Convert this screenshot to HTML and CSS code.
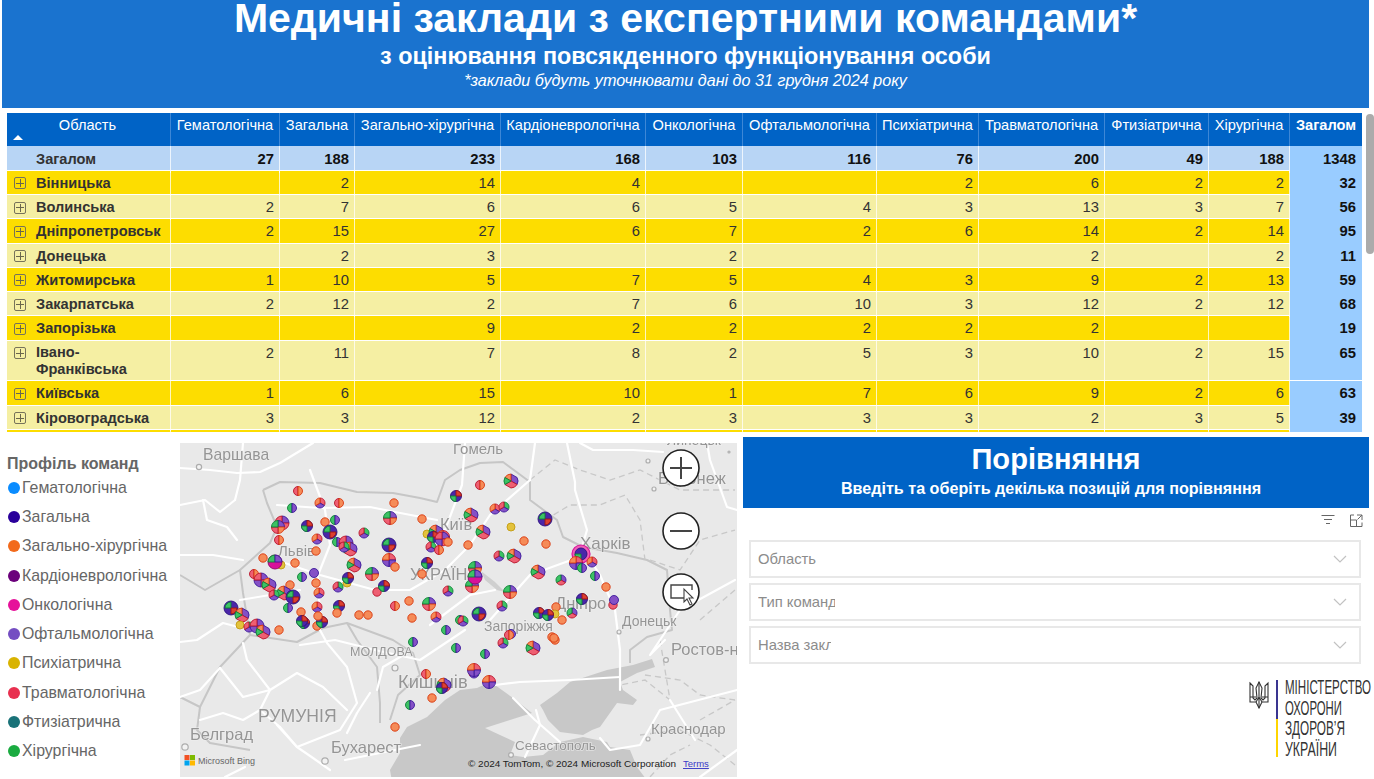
FILE: index.html
```html
<!DOCTYPE html>
<html lang="uk">
<head>
<meta charset="utf-8">
<title>Медичні заклади</title>
<link rel="stylesheet" href="styles.css">
</head>
<body>
<header class="banner">
  <h1>Медичні заклади з експертними командами*</h1>
  <h2>з оцінювання повсякденного функціонування особи</h2>
  <p>*заклади будуть уточнювати дані до 31 грудня 2024 року</p>
</header>

<section class="matrix">
  <div class="row head">
    <div class="cell corner"><span>Область</span><i class="sort"></i></div>
    <div class="cell">Гематологічна</div><div class="cell">Загальна</div><div class="cell">Загально-хірургічна</div><div class="cell">Кардіоневрологічна</div><div class="cell">Онкологічна</div><div class="cell">Офтальмологічна</div><div class="cell">Психіатрична</div><div class="cell">Травматологічна</div><div class="cell">Фтизіатрична</div><div class="cell">Хірургічна</div><div class="cell sum">Загалом</div>
  </div>
  <div class="row total">
    <div class="cell name">Загалом</div>
    <div class="cell">27</div><div class="cell">188</div><div class="cell">233</div><div class="cell">168</div><div class="cell">103</div><div class="cell">116</div><div class="cell">76</div><div class="cell">200</div><div class="cell">49</div><div class="cell">188</div><div class="cell sum">1348</div>
  </div>
  <div class="row odd">
    <div class="cell name"><i class="plus"></i>Вінницька</div>
    <div class="cell"></div><div class="cell">2</div><div class="cell">14</div><div class="cell">4</div><div class="cell"></div><div class="cell"></div><div class="cell">2</div><div class="cell">6</div><div class="cell">2</div><div class="cell">2</div><div class="cell sum">32</div>
  </div>
  <div class="row even">
    <div class="cell name"><i class="plus"></i>Волинська</div>
    <div class="cell">2</div><div class="cell">7</div><div class="cell">6</div><div class="cell">6</div><div class="cell">5</div><div class="cell">4</div><div class="cell">3</div><div class="cell">13</div><div class="cell">3</div><div class="cell">7</div><div class="cell sum">56</div>
  </div>
  <div class="row odd">
    <div class="cell name"><i class="plus"></i>Дніпропетровськ</div>
    <div class="cell">2</div><div class="cell">15</div><div class="cell">27</div><div class="cell">6</div><div class="cell">7</div><div class="cell">2</div><div class="cell">6</div><div class="cell">14</div><div class="cell">2</div><div class="cell">14</div><div class="cell sum">95</div>
  </div>
  <div class="row even">
    <div class="cell name"><i class="plus"></i>Донецька</div>
    <div class="cell"></div><div class="cell">2</div><div class="cell">3</div><div class="cell"></div><div class="cell">2</div><div class="cell"></div><div class="cell"></div><div class="cell">2</div><div class="cell"></div><div class="cell">2</div><div class="cell sum">11</div>
  </div>
  <div class="row odd">
    <div class="cell name"><i class="plus"></i>Житомирська</div>
    <div class="cell">1</div><div class="cell">10</div><div class="cell">5</div><div class="cell">7</div><div class="cell">5</div><div class="cell">4</div><div class="cell">3</div><div class="cell">9</div><div class="cell">2</div><div class="cell">13</div><div class="cell sum">59</div>
  </div>
  <div class="row even">
    <div class="cell name"><i class="plus"></i>Закарпатська</div>
    <div class="cell">2</div><div class="cell">12</div><div class="cell">2</div><div class="cell">7</div><div class="cell">6</div><div class="cell">10</div><div class="cell">3</div><div class="cell">12</div><div class="cell">2</div><div class="cell">12</div><div class="cell sum">68</div>
  </div>
  <div class="row odd">
    <div class="cell name"><i class="plus"></i>Запорізька</div>
    <div class="cell"></div><div class="cell"></div><div class="cell">9</div><div class="cell">2</div><div class="cell">2</div><div class="cell">2</div><div class="cell">2</div><div class="cell">2</div><div class="cell"></div><div class="cell"></div><div class="cell sum">19</div>
  </div>
  <div class="row even tall">
    <div class="cell name"><i class="plus"></i>Івано-<br>Франківська</div>
    <div class="cell">2</div><div class="cell">11</div><div class="cell">7</div><div class="cell">8</div><div class="cell">2</div><div class="cell">5</div><div class="cell">3</div><div class="cell">10</div><div class="cell">2</div><div class="cell">15</div><div class="cell sum">65</div>
  </div>
  <div class="row odd">
    <div class="cell name"><i class="plus"></i>Київська</div>
    <div class="cell">1</div><div class="cell">6</div><div class="cell">15</div><div class="cell">10</div><div class="cell">1</div><div class="cell">7</div><div class="cell">6</div><div class="cell">9</div><div class="cell">2</div><div class="cell">6</div><div class="cell sum">63</div>
  </div>
  <div class="row even">
    <div class="cell name"><i class="plus"></i>Кіровоградська</div>
    <div class="cell">3</div><div class="cell">3</div><div class="cell">12</div><div class="cell">2</div><div class="cell">3</div><div class="cell">3</div><div class="cell">3</div><div class="cell">2</div><div class="cell">3</div><div class="cell">5</div><div class="cell sum">39</div>
  </div>
  <div class="row odd">
    <div class="cell name"></div>
    <div class="cell"></div><div class="cell"></div><div class="cell"></div><div class="cell"></div><div class="cell"></div><div class="cell"></div><div class="cell"></div><div class="cell"></div><div class="cell"></div><div class="cell"></div><div class="cell sum"></div>
  </div>
</section>
<div class="scrollbar"></div>

<main class="bottom">
  <aside class="legend">
    <h3>Профіль команд</h3>
    <ul>
      <li><i class="dot c1"></i>Гематологічна</li>
      <li><i class="dot c2"></i>Загальна</li>
      <li><i class="dot c3"></i>Загально-хірургічна</li>
      <li><i class="dot c4"></i>Кардіоневрологічна</li>
      <li><i class="dot c5"></i>Онкологічна</li>
      <li><i class="dot c6"></i>Офтальмологічна</li>
      <li><i class="dot c7"></i>Психіатрична</li>
      <li><i class="dot c8"></i>Травматологічна</li>
      <li><i class="dot c9"></i>Фтизіатрична</li>
      <li><i class="dot c10"></i>Хірургічна</li>
    </ul>
  </aside>

  <svg class="map" viewBox="180 443 557 334" width="557" height="334" xmlns="http://www.w3.org/2000/svg">
    <defs>
      <g id="o"><circle r="4.2" class="or"/></g>
      <g id="y"><circle r="4" class="ye"/></g>
      <g id="s"><circle r="4.5" class="pu"/></g>
      <g id="k"><circle r="4.2" class="pk"/></g>
      <g id="ho"><path class="pk" d="M0-4.5A4.5 4.5 0 0 0 0 4.5Z"/><path class="or" d="M0-4.5A4.5 4.5 0 0 1 0 4.5Z"/></g>
      <g id="gp"><path class="gr" d="M0-4.5A4.5 4.5 0 0 0 0 4.5Z"/><path class="pu" d="M0-4.5A4.5 4.5 0 0 1 0 4.5Z"/></g>
      <g id="t1"><path class="pk" d="M0 0V-5A5 5 0 0 1 4.33 2.5Z"/><path class="pu" d="M0 0L4.33 2.5A5 5 0 0 1-4.33 2.5Z"/><path class="or" d="M0 0L-4.33 2.5A5 5 0 0 1 0-5Z"/></g>
      <g id="t2"><path class="gr" d="M0 0V-5A5 5 0 0 1 4.33 2.5Z"/><path class="pu" d="M0 0L4.33 2.5A5 5 0 0 1-4.33 2.5Z"/><path class="pk" d="M0 0L-4.33 2.5A5 5 0 0 1 0-5Z"/></g>
      <g id="t3"><path class="pu" d="M0 0V-5A5 5 0 0 1 4.33 2.5Z"/><path class="pk" d="M0 0L4.33 2.5A5 5 0 0 1-4.33 2.5Z"/><path class="gr" d="M0 0L-4.33 2.5A5 5 0 0 1 0-5Z"/></g>
      <g id="q1"><path class="pu" d="M0 0V-6.5A6.5 6.5 0 0 1 6.5 0Z"/><path class="or" d="M0 0H6.5A6.5 6.5 0 0 1 0 6.5Z"/><path class="pk" d="M0 0V6.5A6.5 6.5 0 0 1-6.5 0Z"/><path class="gr" d="M0 0H-6.5A6.5 6.5 0 0 1 0-6.5Z"/></g>
      <g id="q2"><path class="pk" d="M0 0V-6.5A6.5 6.5 0 0 1 6.5 0Z"/><path class="pu" d="M0 0H6.5A6.5 6.5 0 0 1 0 6.5Z"/><path class="pu" d="M0 0V6.5A6.5 6.5 0 0 1-6.5 0Z"/><path class="or" d="M0 0H-6.5A6.5 6.5 0 0 1 0-6.5Z"/></g>
      <g id="l1"><path class="pu" d="M0 0V-7L6.06-3.5A7 7 0 0 1 6.06 3.5Z"/><path class="or" d="M0 0L-6.06-3.5A7 7 0 0 1 0-7Z"/><path class="pk" d="M0 0L6.06 3.5A7 7 0 0 1 0 7L-6.06 3.5Z"/><path class="gr" d="M0 0L-6.06 3.5A7 7 0 0 1-6.06-3.5Z"/></g>
      <g id="l2"><path class="pu" d="M0 0V-7A7 7 0 0 1 7 0Z"/><path class="pk" d="M0 0H7A7 7 0 0 1 0 7Z"/><path class="pu" d="M0 0V7A7 7 0 0 1-7 0Z"/><path class="pk" d="M0 0H-7A7 7 0 0 1 0-7Z"/></g>
      <g id="d1"><circle r="7" class="nv"/><path class="gr" d="M0 0H-6A6 6 0 0 1 0-6Z"/><path class="rd" d="M0 0H6A6 6 0 0 1 0 6Z"/></g>
      <g id="d2"><circle r="5.500" class="nv"/><path class="gr" d="M0 0V5.500A5.500 5.500 0 0 1-5.500 0Z"/><path class="rd" d="M0 0V-5.500A5.500 5.500 0 0 1 5.500 0Z"/></g>
      <g id="m1"><circle r="7" class="mg"/><path class="gr" d="M0 0V-7A7 7 0 0 0-7 0Z"/><path class="pu" d="M0 0V-7A7 7 0 0 1 7 0Z"/></g>
      <g id="r1"><circle r="9" class="ring"/><circle r="6" class="nv"/><path class="gr" d="M0 0V6A6 6 0 0 1-6 0Z"/></g>
    </defs>

    <g class="base">
    <rect class="land" x="170" y="433" width="577" height="354"/>
    <path class="sea" d="M393 787L390 770 400 753 400 738 407 727 427 717 445 700 460 690 477 688 490 682 495 685 513 698 532 713 510 720 485 728 500 735 515 742 510 755 523 757 543 755 560 742 583 737 607 742 610 747 630 750 637 767 652 787Z"/>
    <path class="sea" d="M540 705L557 693 570 682 607 670 633 665 652 659 655 667 637 673 620 682 623 690 637 700 633 705 617 703 600 727 592 730 583 735 560 732 548 720 543 710Z"/>
    <path class="sea lake" d="M481 571L495 582 505 592 497 590 485 580Z"/>

    <g class="borders">
      <path d="M263 490L280 482 320 483 357 492 393 493 420 498 437 502 445 480 460 470 480 463 503 462 530 482 530 500 557 520 563 537 583 547 617 553 647 560 667 570 670 610 672 630 647 637 630 650 630 663"/>
      <path d="M263 490L267 503 277 527 270 543 240 570 243 593 250 635 297 642 323 628 347 623 357 640 377 667 380 703 380 723"/>
      <path d="M347 623L393 640 413 653 420 675 398 695 390 720"/>
      <path d="M250 635L220 667 200 707 180 697"/>
      <path d="M200 707L197 730 210 743 250 750"/>
      <path d="M240 570L205 590 180 575"/>
    </g>
    <g class="dashes">
      <path d="M530 480L555 460 580 470 610 480 640 470 680 490 735 490"/>
      <path d="M545 520L570 505 600 505 625 495 640 520 645 560"/>
      <path d="M650 560L680 570 700 540 735 530"/>
      <path d="M660 640L670 700 645 680 620 685"/>
      <path d="M645 675L680 680 700 695 735 700"/>
      <path d="M640 735L680 730 710 745 735 765"/>
      <path d="M650 777L670 755 690 745"/>
      <path d="M700 620L735 590"/>
      <path d="M700 720L735 700"/>
    </g>
    <g class="roads">
      <path d="M180 468L210 470 237 473 260 472 280 463 313 443"/>
      <path d="M243 443L240 480 235 500"/>
      <path d="M180 505L205 500 220 512 235 500"/>
      <path d="M180 555L213 555 243 560"/>
      <path d="M203 500L207 520 227 527 237 540"/>
      <path d="M277 505L320 508 370 507 395 512 437 520"/>
      <path d="M310 470L325 510 330 545 318 575 320 620"/>
      <path d="M270 558L320 575 375 590 410 590 445 570 470 545 490 515 530 480"/>
      <path d="M240 600L300 590"/>
      <path d="M465 443L462 485 445 530"/>
      <path d="M535 443L530 480"/>
      <path d="M567 443L575 482 575 490 587 530 582 547 600 575 615 610 620 650 620 690"/>
      <path d="M490 620L530 575 585 555"/>
      <path d="M580 443L593 450 633 450 663 452"/>
      <path d="M707 443L710 460 727 507 737 510"/>
      <path d="M430 625L470 595 495 590"/>
      <path d="M620 677L570 680 520 682 495 685"/>
      <path d="M536 710L540 725 525 757"/>
      <path d="M513 698L535 720 560 742"/>
      <path d="M600 738L610 750 640 745 660 710 737 690"/>
      <path d="M670 700L695 740"/>
      <path d="M180 642L197 640 223 623 250 630"/>
      <path d="M220 668L243 697 270 690 297 673 323 687 347 710"/>
      <path d="M243 643L247 660 270 690"/>
      <path d="M320 630L327 643 347 667 357 703 340 730 297 747 280 727"/>
      <path d="M270 690L260 710 280 727"/>
      <path d="M200 720L223 713 243 720 260 710"/>
      <path d="M277 725L297 747 313 758 330 770"/>
      <path d="M377 690L383 667 407 653"/>
      <path d="M370 693L357 713 347 733"/>
      <path d="M180 697L200 690 220 668"/>
      <path d="M300 645L335 640 375 650 420 660 465 630"/>
      <path d="M225 777L245 767"/>
      <path d="M665 640L650 655 680 610 735 580"/>
      <path d="M345 760L420 745"/>
      <path d="M700 777L737 750"/>
    </g>

    <g class="cities">
      <circle cx="199" cy="467" r="2.6"/><circle cx="729" cy="452" r="1"/><circle cx="654" cy="489" r="2"/>
      <circle cx="185" cy="747" r="3.2"/><circle cx="325" cy="761" r="3.2"/><circle cx="395" cy="668" r="3"/>
      <circle cx="619" cy="632" r="2"/><circle cx="666" cy="660" r="2.4"/><circle cx="648" cy="739" r="2"/><circle cx="511" cy="755" r="2.4"/><circle cx="648" cy="461" r="2"/>
    </g>

    <g class="labels">
      <text x="203" y="460" class="m">Варшава</text>
      <text x="453" y="454">Гомель</text>
      <text x="440" y="530" class="big">Київ</text>
      <text x="278" y="556">Львів</text>
      <text x="410" y="580" class="big">УКРАЇНА</text>
      <text x="580" y="549" class="c">Харків</text>
      <text x="555" y="609" class="big">Дніпро</text>
      <text x="484" y="631" class="n">Запоріжжя</text>
      <text x="622" y="626" class="n">Донецьк</text>
      <text x="671" y="655" class="big">Ростов-на-Дону</text>
      <text x="350" y="656" class="sm">МОЛДОВА</text>
      <text x="398" y="688" class="xl">Кишинів</text>
      <text x="258" y="722" class="r">РУМУНІЯ</text>
      <text x="190" y="740" class="big">Белград</text>
      <text x="331" y="753" class="big">Бухарест</text>
      <text x="515" y="750" class="t">Севастополь</text>
      <text x="651" y="734">Краснодар</text>
      <text x="658" y="484" class="big">Воронеж</text>
      <text x="667" y="445" class="n">Липецьк</text>
    </g>
    </g>

    <g>
      <use href="#ho" x="298" y="491"/><use href="#t1" x="320" y="503"/><use href="#ho" x="339" y="503"/><use href="#o" x="394" y="503"/>
      <use href="#gp" x="292" y="508"/><use href="#q1" x="390" y="518"/><use href="#o" x="422" y="519"/><use href="#o" x="325" y="522"/>
      <use href="#gp" x="335" y="520"/><use href="#l2" x="282" y="523"/><use href="#q1" x="278" y="527"/><use href="#d2" x="307" y="526"/>
      <use href="#t2" x="364" y="533"/><use href="#d1" x="330" y="532"/><use href="#ho" x="279" y="540"/><use href="#t1" x="317" y="539"/>
      <use href="#gp" x="337" y="542"/><use href="#l2" x="346" y="543"/><use href="#l1" x="350" y="549"/><use href="#t2" x="344" y="547"/>
      <use href="#o" x="316" y="551"/><use href="#d1" x="389" y="545"/><use href="#q2" x="389" y="560"/><use href="#o" x="395" y="567"/>
      <use href="#o" x="263" y="558"/><use href="#y" x="281" y="565"/><use href="#m1" x="275" y="562"/><use href="#o" x="295" y="563"/>
      <use href="#l1" x="354" y="565"/><use href="#d2" x="427" y="563"/><use href="#s" x="314" y="573"/><use href="#ho" x="254" y="574"/>
      <use href="#l2" x="261" y="580"/><use href="#l1" x="269" y="585"/><use href="#gp" x="302" y="577"/><use href="#o" x="316" y="583"/>
      <use href="#y" x="347" y="583"/><use href="#d2" x="348" y="578"/><use href="#q1" x="372" y="574"/><use href="#o" x="422" y="574"/>
      <use href="#t2" x="338" y="587"/><use href="#k" x="377" y="592"/><use href="#d2" x="384" y="586"/><use href="#t1" x="319" y="593"/>
      <use href="#o" x="290" y="585"/><use href="#l1" x="284" y="593"/><use href="#d1" x="293" y="597"/><use href="#t2" x="274" y="595"/>
      <use href="#t2" x="448" y="591"/><use href="#o" x="409" y="601"/><use href="#ho" x="395" y="606"/><use href="#q1" x="429" y="604"/>
      <use href="#t1" x="317" y="607"/><use href="#d2" x="339" y="606"/><use href="#gp" x="288" y="608"/><use href="#d1" x="231" y="608"/>
      <use href="#y" x="427" y="534"/><use href="#l1" x="436" y="532"/><use href="#q2" x="443" y="537"/><use href="#d2" x="433" y="537"/><use href="#l2" x="442" y="539"/>
      <use href="#o" x="448" y="542"/><use href="#t2" x="431" y="547"/><use href="#ho" x="439" y="550"/><use href="#d2" x="456" y="496"/>

      <use href="#ho" x="480" y="485"/><use href="#l1" x="511" y="481"/><use href="#l1" x="471" y="515"/><use href="#t1" x="495" y="509"/><use href="#t2" x="504" y="507"/>
      <use href="#d1" x="545" y="519"/><use href="#l1" x="483" y="532"/><use href="#y" x="511" y="527"/><use href="#o" x="524" y="541"/><use href="#o" x="546" y="544"/>
      <use href="#o" x="468" y="545"/><use href="#t2" x="499" y="556"/><use href="#l1" x="514" y="556"/>
      <use href="#r1" x="581" y="554"/><use href="#q2" x="576" y="563"/><use href="#t1" x="592" y="562"/><use href="#gp" x="582" y="568"/><use href="#gp" x="595" y="576"/><use href="#o" x="606" y="587"/>
      <use href="#l1" x="538" y="572"/><use href="#t3" x="561" y="580"/><use href="#q1" x="475" y="568"/><use href="#q1" x="472" y="586"/><use href="#m1" x="475" y="577"/>
      <use href="#q1" x="510" y="592"/><use href="#d2" x="582" y="599"/><use href="#k" x="613" y="605"/><use href="#s" x="614" y="600"/><use href="#t2" x="502" y="606"/><use href="#o" x="556" y="607"/>

      <use href="#l1" x="242" y="615"/><use href="#y" x="240" y="625"/><use href="#t2" x="249" y="627"/><use href="#l2" x="257" y="626"/><use href="#l1" x="263" y="632"/><use href="#o" x="279" y="630"/>
      <use href="#o" x="301" y="612"/><use href="#d2" x="304" y="623"/><use href="#d2" x="302" y="621"/><use href="#o" x="317" y="626"/><use href="#d2" x="322" y="622"/><use href="#o" x="318" y="616"/>
      <use href="#o" x="337" y="613"/><use href="#o" x="359" y="615"/><use href="#o" x="368" y="615"/><use href="#o" x="412" y="618"/><use href="#t1" x="436" y="617"/><use href="#gp" x="446" y="630"/><use href="#gp" x="460" y="620"/>
      <use href="#gp" x="413" y="642"/><use href="#gp" x="456" y="648"/><use href="#ho" x="426" y="674"/><use href="#l1" x="444" y="685"/><use href="#d2" x="442" y="688"/><use href="#o" x="432" y="698"/><use href="#gp" x="410" y="705"/><use href="#o" x="395" y="727"/>

      <use href="#t2" x="463" y="621"/><use href="#d1" x="479" y="614"/><use href="#d2" x="539" y="613"/><use href="#y" x="555" y="614"/><use href="#d2" x="548" y="615"/><use href="#o" x="562" y="620"/><use href="#t3" x="572" y="613"/>
      <use href="#s" x="511" y="634"/><use href="#ho" x="509" y="635"/><use href="#t2" x="503" y="643"/><use href="#l1" x="533" y="648"/><use href="#o" x="552" y="637"/><use href="#o" x="555" y="640"/><use href="#o" x="554" y="638"/>
      <use href="#gp" x="485" y="654"/><use href="#t2" x="474" y="673"/><use href="#q2" x="474" y="670"/><use href="#q2" x="489" y="682"/>
    </g>

    <g class="ctrl">
      <circle cx="681" cy="468" r="18"/><path d="M670 468H692M681 457V479"/>
      <circle cx="681" cy="531" r="18"/><path d="M670 531H692"/>
      <circle cx="681" cy="592" r="18"/>
      <path class="thin" d="M688 598H671V585H692V590"/>
      <path class="arrow" d="M684 589L684 602 687 599 690 605 692 604 689 598 693 598Z"/>
    </g>

    <g>
      <rect class="ms1" x="184.500" y="755" width="5" height="5"/><rect class="ms2" x="190" y="755" width="5" height="5"/>
      <rect class="ms3" x="184.500" y="760.500" width="5" height="5"/><rect class="ms4" x="190" y="760.500" width="5" height="5"/>
      <text class="bing" x="198" y="764" textLength="57" lengthAdjust="spacingAndGlyphs">Microsoft Bing</text>
      <text class="copy" x="468" y="767" textLength="208" lengthAdjust="spacingAndGlyphs">© 2024 TomTom, © 2024 Microsoft Corporation</text>
      <text class="terms" x="683" y="767">Terms</text>
    </g>
  </svg>

  <section class="compare">
    <header class="cmp-head">
      <h2>Порівняння</h2>
      <p>Введіть та оберіть декілька позицій для порівняння</p>
    </header>
    <div class="tools">
      <svg width="14" height="12" viewBox="0 0 14 12"><path class="ic" d="M0.500 1.500H13.500M3 5.500H11M5 9.500H9"/></svg>
      <svg width="14" height="14" viewBox="0 0 14 14"><path class="ic" d="M5 1H1.500V12.500H13V8.500M1.500 6H7.500V12.500M8 1H13V6M13 1L8.500 5.500"/></svg>
    </div>
    <div class="slicers">
      <div class="slicer"><span class="s1">Область</span><svg width="14" height="8" viewBox="0 0 14 8"><path class="chev" d="M1 1L7 7 13 1"/></svg></div>
      <div class="slicer"><span class="s2">Тип команд</span><svg width="14" height="8" viewBox="0 0 14 8"><path class="chev" d="M1 1L7 7 13 1"/></svg></div>
      <div class="slicer"><span class="s3">Назва закладу</span><svg width="14" height="8" viewBox="0 0 14 8"><path class="chev" d="M1 1L7 7 13 1"/></svg></div>
    </div>
    <div class="moh">
      <svg class="trident" width="20" height="28" viewBox="0 0 20 28"><path d="M1 2L4 5 4 17 6 19 8 17 7 7 10 1 13 7 12 17 14 19 16 17 16 5 19 2 19 21 13 21 10 27 7 21 1 21Z"/><path d="M10 1V27M1 16H7M13 16H19M7 21L10 16 13 21"/></svg>
      <i class="bar"></i>
      <svg class="moh-text" width="92" height="82" viewBox="0 0 92 82">
        <text x="0" y="17" textLength="86" lengthAdjust="spacingAndGlyphs">МІНІСТЕРСТВО</text>
        <text x="0" y="38" textLength="57" lengthAdjust="spacingAndGlyphs">ОХОРОНИ</text>
        <text x="0" y="58" textLength="60" lengthAdjust="spacingAndGlyphs">ЗДОРОВ’Я</text>
        <text x="0" y="79" textLength="52" lengthAdjust="spacingAndGlyphs">УКРАЇНИ</text>
      </svg>
    </div>
  </section>
</main>
</body>
</html>
```
FILE: styles.css
```css
* { box-sizing: border-box; }
html, body { margin: 0; padding: 0; }
body {
  width: 1374px;
  height: 779px;
  overflow: hidden;
  position: relative;
  background: #fff;
  font-family: "Liberation Sans", Arial, sans-serif;
  color: #333;
}

.banner {
  width: 1367px;
  height: 108px;
  margin-left: 2px;
  background: #1a73cf;
  color: #fff;
  text-align: center;
  overflow: hidden;
}
.banner h1 { margin: -6px 0 0; font-size: 41px; line-height: 48px; font-weight: 700; }
.banner h2 { margin: 1px 0 0; font-size: 23.400px; line-height: 26px; font-weight: 700; }
.banner p { margin: 1px 0 0; font-size: 16.150px; line-height: 20px; font-style: italic; }

.matrix {
  width: 1355px;
  height: 319px;
  margin: 5px 0 0 7px;
  overflow: hidden;
  font-size: 14.800px;
}
.row {
  display: grid;
  grid-template-columns: 164px 109px 75px 146px 145px 97px 134px 102px 126px 104px 81px 72px;
  height: 24.250px;
  border-bottom: 1px solid #fff;
}
.row.tall { height: 40.750px; }
.cell {
  padding: 0 5px 0 0;
  text-align: right;
  line-height: 25px;
  border-right: 1px solid rgba(255,255,255,.75);
  white-space: nowrap;
}
.cell.name {
  position: relative;
  padding: 0 0 0 29px;
  text-align: left;
  font-weight: 700;
  font-size: 14.600px;
  color: #333;
  white-space: normal;
}
.row.tall .cell.name { line-height: 17px; padding-top: 3px; }
.cell.sum { background: #99ccff; font-weight: 700; color: #111; border-right: 0; padding-right: 6px; }

.row.head {
  height: 33px;
  background: #0063c6;
  color: #fff;
  border-bottom: 0;
  font-size: 14.600px;
}
.row.head .cell {
  text-align: center;
  padding: 0;
  line-height: 24px;
  border-right: 1px solid #3d87d6;
}
.row.head .sum { background: transparent; color: #fff; border-right: 0; }
.corner { position: relative; }
.corner span { display: block; margin-left: -2px; }
.sort {
  position: absolute;
  left: 6px;
  bottom: 6px;
  border-left: 5px solid transparent;
  border-right: 5px solid transparent;
  border-bottom: 5px solid #fff;
}

.row.total { background: #b8d5f5; height: 24.750px; font-weight: 700; color: #111; }
.row.total .cell { line-height: 27px; }
.row.odd { background: #fddd00; }
.row.even { background: #f5efa3; }
.row.odd .cell:not(.sum) { color: #333; }

.plus {
  position: absolute;
  left: 7px;
  top: 6.500px;
  width: 12px;
  height: 12px;
  border: 1px solid #77735a;
  border-radius: 2px;
  background:
    linear-gradient(#6a664c, #6a664c) center / 8px 1px no-repeat,
    linear-gradient(#6a664c, #6a664c) center / 1px 8px no-repeat;
}

.scrollbar {
  position: absolute;
  left: 1366px;
  top: 114px;
  width: 8px;
  height: 140px;
  border-radius: 4px;
  background: #ababab;
}

.bottom { display: flex; margin-top: 5px; align-items: flex-start; }

.legend { width: 180px; padding: 18px 0 0 7px; flex: none; color: #666; }
.legend h3 { margin: 0; font-size: 16px; line-height: 18px; font-weight: 700; color: #666; }
.legend ul { list-style: none; margin: 0; padding: 0; }
.legend li {
  display: flex;
  align-items: center;
  gap: 2px;
  height: 29.300px;
  font-size: 15.900px;
  white-space: nowrap;
}
.dot { width: 12px; height: 12px; border-radius: 50%; margin-left: 1px; flex: none; }
.c1 { background: #0a8cff; } .c2 { background: #2a009b; } .c3 { background: #f26a1b; }
.c4 { background: #6b007b; } .c5 { background: #e6119a; } .c6 { background: #744ec2; }
.c7 { background: #d9b300; } .c8 { background: #e8304f; } .c9 { background: #197278; }
.c10 { background: #1aab40; }

.map { flex: none; margin-top: 6px; display: block; }
.base { filter: blur(.4px); }
.land { fill: #e9e9e9; }
.sea { fill: #c8c8c8; }
.lake { fill: #cfcfcf; }
.roads path { fill: none; stroke: #fff; stroke-width: 2.200px; stroke-linejoin: round; stroke-linecap: round; }
.borders path { fill: none; stroke: #c6c6c6; stroke-width: 2px; stroke-linejoin: round; }
.dashes path { fill: none; stroke: #c8c8c8; stroke-width: 1.300px; stroke-dasharray: 6 4; }
.cities circle { fill: #f2f2f2; stroke: #adadad; stroke-width: 1.200px; }
.labels text { fill: #959595; font-size: 15px; paint-order: stroke; stroke: rgba(240,240,240,.7); stroke-width: 1.500px; }
.labels .m { font-size: 15.700px; }
.labels .c { font-size: 17px; }
.labels .n { font-size: 14px; }
.labels .t { font-size: 13.400px; }
.labels .big { font-size: 16.500px; }
.labels .sm { font-size: 12.500px; }
.labels .xl { font-size: 18.300px; }
.labels .r { font-size: 17.600px; }

.or { fill: #f58b58; stroke: #d8380f; stroke-width: .9px; }
.ye { fill: #e3c23c; stroke: #c29c12; stroke-width: .9px; }
.pu { fill: #8450c6; stroke: #3a1a9a; stroke-width: .9px; }
.pk { fill: #ee5f72; stroke: #b8142a; stroke-width: .9px; }
.gr { fill: #3cc264; stroke: #0c8035; stroke-width: .9px; }
.rd { fill: #dc4030; stroke: #9a1412; stroke-width: .9px; }
.nv { fill: #4a26a8; stroke: #2a1080; stroke-width: .9px; }
.mg { fill: #d8129a; stroke: #8a0a6a; stroke-width: .9px; }
.ring { fill: #ef5fb5; stroke: #d8129a; stroke-width: 1.200px; }

.ctrl circle { fill: #fff; stroke: #222; stroke-width: 1.600px; }
.ctrl path { fill: none; stroke: #444; stroke-width: 2px; }
.ctrl .thin { stroke-width: 1.400px; }
.ctrl .arrow { fill: #fff; stroke: #444; stroke-width: 1.100px; }

.ms1 { fill: #f25022; } .ms2 { fill: #7fba00; } .ms3 { fill: #00a4ef; } .ms4 { fill: #ffb900; }
.bing { font-size: 9px; fill: #666; }
.copy { font-size: 9.500px; fill: #222; }
.terms { font-size: 9.500px; fill: #3a3ac8; text-decoration: underline; }

.compare { flex: none; width: 626px; margin-left: 6px; position: relative; height: 340px; }
.cmp-head { height: 71px; background: #0063c6; color: #fff; text-align: center; }
.cmp-head h2 { margin: 0; padding-top: 5px; font-size: 29.100px; line-height: 34px; font-weight: 700; }
.cmp-head p { margin: 2px 0 0; padding-right: 10px; font-size: 16.150px; line-height: 20px; font-weight: 700; }

.tools { display: flex; justify-content: flex-end; gap: 14px; height: 32px; padding: 6px 6px 0 0; align-items: flex-start; }
.ic { fill: none; stroke: #666; stroke-width: 1px; }

.slicers { display: flex; flex-direction: column; gap: 5px; padding: 0 8px 0 6px; }
.slicer {
  display: flex;
  align-items: center;
  justify-content: space-between;
  height: 38px;
  padding: 0 12px 0 7px;
  border: 2px solid #e8e8e8;
  font-size: 14.800px;
  color: #8c8c8c;
}
.slicer span { display: block; overflow: hidden; white-space: nowrap; }
.s1 { width: 70px; }
.s2 { width: 77px; }
.s3 { width: 73px; }
.chev { fill: none; stroke: #c2c2c2; stroke-width: 1.200px; }

.moh {
  position: absolute;
  left: 506px;
  top: 243px;
  display: flex;
  align-items: flex-start;
}
.trident { margin-top: 1px; }
.trident path { fill: none; stroke: #333; stroke-width: 1.100px; }
.bar {
  width: 2px;
  height: 77px;
  margin-left: 7px;
  background: linear-gradient(#3a3590 0, #3a3590 50%, #ffd500 50%, #ffd500 100%);
}
.moh-text { margin-left: 7px; margin-top: -3px; overflow: visible; }
.moh-text text { font-size: 20.500px; fill: #333; }
```
